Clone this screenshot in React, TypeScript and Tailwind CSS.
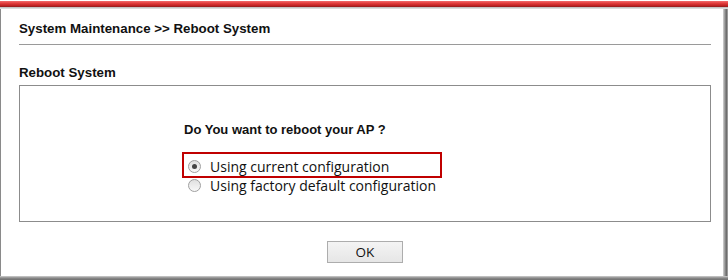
export default function App() {
  return (
    <div className="w-[728px] h-[280px] bg-white flex flex-col overflow-hidden" style={{ fontFamily: '"Liberation Sans", Arial, sans-serif' }}>
      {/* top red bar */}
      <div className="h-[1px] bg-white shrink-0" />
      <div className="h-[6px] shrink-0 bg-[linear-gradient(to_bottom,#f26b6b,#e03a3a_40%,#c02424_75%,#8f1c1c)]" />
      <div className="h-[2px] shrink-0 bg-[linear-gradient(to_bottom,#b8b8b8,#e8e8e8)]" />
      <div className="flex flex-1 min-h-0">
        <div className="w-[1px] bg-[#8a8a8a] shrink-0" />
        <div className="flex-1 flex flex-col pl-[18px] pr-[12px]">
          <div className="pt-[12px] pb-[7px] border-b border-[#9a9a9a]">
            <div className="text-[13.3px] leading-[16px] font-bold text-[#111]">System Maintenance &gt;&gt; Reboot System</div>
          </div>
          <div className="mt-[20px] text-[13.3px] leading-[16px] font-bold text-[#111]">Reboot System</div>
          <div className="mt-[4px] h-[137px] border border-[#8c8c8c] flex flex-col pl-[164px] pt-[36px]">
            <div className="text-[13px] leading-[16px] font-bold text-[#111]">Do You want to reboot your AP ?</div>
            <div className="mt-[19px] flex flex-col" style={{ fontFamily: '"Open Sans", "Noto Sans", sans-serif' }}>
              <div className="relative h-[19px] flex items-center pl-[4px]">
                <div className="absolute left-[-2px] top-[-5px] w-[260px] h-[26px] border-2 border-[#c00000]" />
                <Radio checked />
                <span className="ml-[9px] text-[14px] leading-[19px] text-[#111]">Using current configuration</span>
              </div>
              <div className="h-[19px] flex items-center pl-[4px]">
                <Radio />
                <span className="ml-[9px] text-[14px] leading-[19px] text-[#111]">Using factory default configuration</span>
              </div>
            </div>
          </div>
          <div className="mt-[19px] flex justify-center">
            <button className="w-[76px] h-[22px] border border-[#adadad] bg-[linear-gradient(to_bottom,#f4f4f4,#e6e6e6)] text-[13.5px] text-[#111] flex items-center justify-center" style={{ fontFamily: '"Open Sans", sans-serif' }}>OK</button>
          </div>
        </div>
        <div className="w-[5px] shrink-0 bg-[linear-gradient(to_right,#d4d4d4,#8a8a8a_45%,#6e6e6e_70%,#b0b0b0)]" />
      </div>
      <div className="h-[4px] shrink-0 bg-[linear-gradient(to_bottom,#d0d0d0,#8a8a8a_50%,#6e6e6e)]" />
    </div>
  );
}

function Radio({ checked = false }: { checked?: boolean }) {
  return (
    <div className="w-[13px] h-[13px] rounded-full border border-[#a0a0a0] bg-[linear-gradient(to_bottom,#e0e0e0,#f8f8f8)] flex items-center justify-center shrink-0">
      {checked && <div className="w-[5px] h-[5px] rounded-full bg-[#444]" />}
    </div>
  );
}
